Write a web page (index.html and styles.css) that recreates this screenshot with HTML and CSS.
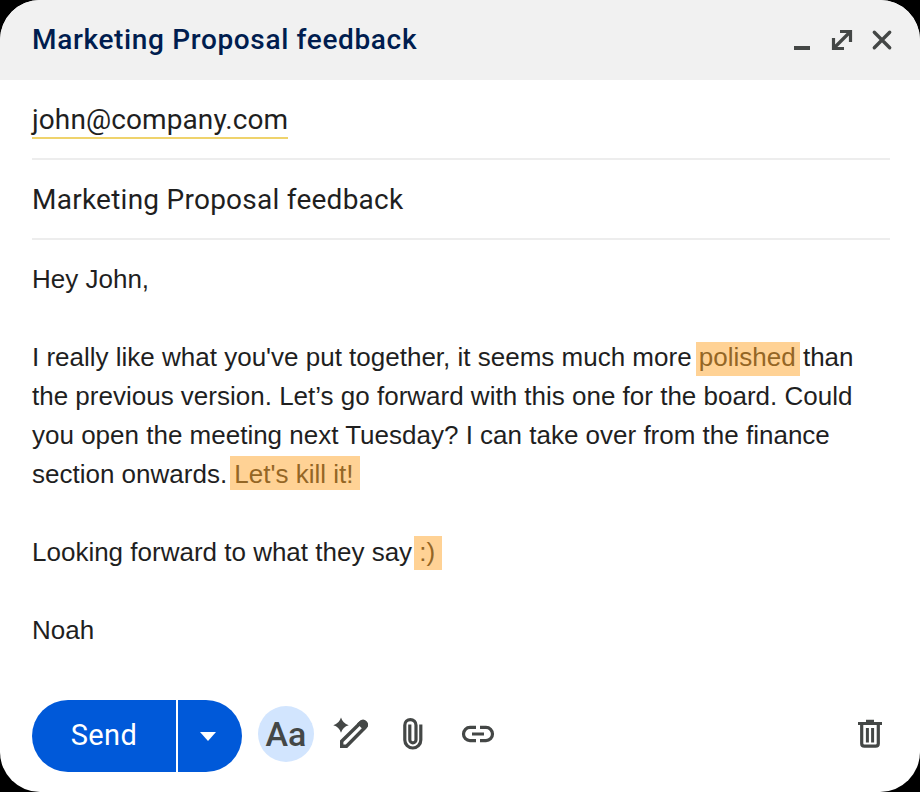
FILE: index.html
```html
<!DOCTYPE html>
<html lang="en">
<head>
<meta charset="utf-8">
<title>Marketing Proposal feedback</title>
<link rel="stylesheet" href="styles.css">
</head>
<body>
<main class="compose">
  <header class="titlebar">
    <h1 class="title">Marketing Proposal feedback</h1>
    <svg class="window-icons" width="104" height="32" viewBox="792 24 104 32">
      <path d="M794 48h16" stroke-width="4"/>
      <path d="M834.500 47.500l15-15M840 31.500h10.500v10.500M833.500 38v10.500h10.500" stroke-width="3.200"/>
      <path d="M874.300 32.300l15.400 15.400m0-15.400l-15.400 15.400" stroke-width="3.400" stroke-linecap="round"/>
    </svg>
  </header>
  <div class="field"><span class="recipient">john@company.com</span></div>
  <div class="field"><span class="subject">Marketing Proposal feedback</span></div>
  <article class="message">
    <p><span class="line">Hey John,</span></p>
    <p>
      <span class="line">I really like what you've put together, it seems much more <mark class="polished">polished</mark> than</span>
      <span class="line">the previous version. Let’s go forward with this one for the board. Could</span>
      <span class="line">you open the meeting next Tuesday? I can take over from the finance</span>
      <span class="line">section onwards. <mark class="kill">Let's kill it!</mark></span>
    </p>
    <p><span class="line">Looking forward to what they say <mark class="smile">:)</mark></span></p>
    <p><span class="line">Noah</span></p>
  </article>
  <footer class="toolbar">
    <button class="send"><span class="send-label">Send</span></button>
    <button class="send-more" aria-label="More send options"><svg width="16" height="9" viewBox="0 0 16 9"><path d="M0 0h16L8 9z" fill="#fff"/></svg></button>
    <button class="format"><span>Aa</span></button>
    <svg class="tools" width="170" height="40" viewBox="330 714 170 40">
      <path class="solid" d="M341 717.500Q342.800 723.500 348.700 725.200Q342.800 726.800 341 732.700Q339.200 726.800 333.300 725.200Q339.200 723.500 341 717.500Z"/>
      <path d="M341.700 746.300v-5L360.500 722.700q2.500-2.500 4.700-.3t0 4.900L346.500 746.300z" stroke-width="3.400"/>
      <path class="solid" d="M357 723.500l3.500-3q3.500-1.500 6 .9 2.500 2.700 1 5.500l-3.500 3.600z"/>
      <path d="M420.800 724.500v15.500a8 8 0 0 1-16 0V725.200a5.600 5.600 0 0 1 11.200 0v14.500a3.100 3.100 0 0 1-6.200 0V724.500" stroke-width="3.200"/>
      <path d="M476 727.300h-6a6.500 6.700 0 0 0 0 13.400h6M480 727.300h6a6.500 6.700 0 0 1 0 13.400H480M472 734h12" stroke-width="3.200"/>
    </svg>
    <svg class="trash" width="28" height="32" viewBox="856 718 28 32">
      <path d="M861.700 724v19.500q0 2.700 2.700 2.700h11.200q2.700 0 2.700-2.700v-19.500" stroke-width="3.200"/>
      <path d="M858 723.500h24" stroke-width="3.200"/><path d="M866 721.500h8" stroke-width="3.400"/>
      <path d="M867.400 728v14.500M872.600 728v14.500" stroke-width="3"/>
    </svg>
  </footer>
</main>
</body>
</html>
```
FILE: styles.css
```css
* { box-sizing: border-box; }
body { margin: 0; background: #000; }
.compose {
  width: 920px; height: 792px; overflow: hidden;
  display: flex; flex-direction: column;
  border-radius: 40px; background: #fff; color: #1f1f1f;
  font-family: Roboto, "Liberation Sans", sans-serif;
}
.titlebar {
  height: 80px; padding: 0 24px 0 32px;
  display: flex; align-items: center; justify-content: space-between;
  background: #f1f1f1;
}
.title { margin: 0; padding-bottom: 2px; color: #001d4f; font-size: 28px; font-weight: 500; letter-spacing: .65px; }
svg { display: block; fill: none; stroke: #444746; }
.solid { fill: #444746; stroke: none; }
.field {
  height: 80px; margin: 0 30px 0 32px;
  display: flex; align-items: center;
  border-bottom: 2px solid #ededed; font-size: 28px;
}
.recipient { margin-top: 2px; line-height: 35px; border-bottom: 2px solid #efd36c; letter-spacing: .1px; }
.subject { padding-top: 1px; letter-spacing: .25px; }
.message {
  flex: 1; padding: 20px 32px 0;
  font: 26px/39px "Liberation Sans", Arial, sans-serif;
}
.message p { margin: 0 0 39px; }
.line { display: block; white-space: nowrap; }
mark { color: #946625; background: #ffd295; }
.polished { padding: 0 4px 4px 3px; margin: 0 -4px 0 -3px; }
.kill { padding: 3px 7px 1px 4px; margin: 0 -7px 0 -4px; }
.smile { padding: 1px 7px 3px 5px; margin: 0 -7px 0 -5px; }
.toolbar { height: 92px; padding: 0 32px 0; display: flex; align-items: flex-start; }
button { border: 0; padding: 0; font: inherit; display: flex; align-items: center; justify-content: center; }
.send { width: 144px; height: 72px; padding-bottom: 2px; border-radius: 36px 0 0 36px; background: #0059d9; color: #fff; font-size: 29px; font-weight: 400; letter-spacing: .4px; }
.send-more { width: 64px; height: 72px; margin-left: 2px; padding: 0 4px 0 0; border-radius: 0 36px 36px 0; background: #0059d9; }
.send-more svg { stroke: none; }
.format { width: 56px; height: 56px; margin: 6px 0 0 16px; border-radius: 50%; background: #d2e5fe; color: #444746; font-size: 34px; font-weight: 500; }
.tools { margin: 14px 0 0 16px; }
.trash { margin: 18px 4px 0 auto; }
```
